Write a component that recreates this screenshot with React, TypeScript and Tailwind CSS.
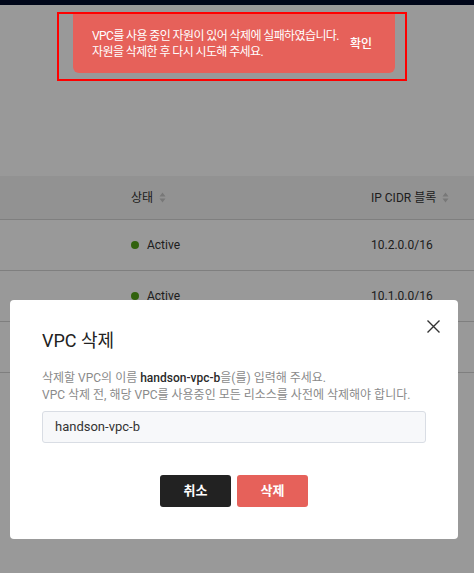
import React from 'react';

const SortIcon: React.FC = () => (
  <svg width="7" height="11" viewBox="0 0 7 11" className="ml-[6px] text-[#c8c8c8]" fill="currentColor">
    <path d="M3.5 0.5 L6.5 4.5 L0.5 4.5 Z" />
    <path d="M3.5 10.5 L6.5 6.5 L0.5 6.5 Z" />
  </svg>
);

const rows = [
  { status: 'Active', cidr: '10.2.0.0/16' },
  { status: 'Active', cidr: '10.1.0.0/16' },
  { status: 'Active', cidr: '10.0.0.0/16' },
];

const App: React.FC = () => {
  return (
    <div className="relative w-full h-[573px] overflow-hidden bg-white font-['Roboto','Noto_Sans_CJK_KR',sans-serif]">
      {/* page underneath */}
      <div className="h-[5px] bg-[#000a2b]" />
      <div className="h-[171px]" />
      <div className="flex items-center h-[44px] bg-[#f4f4f4] border-b border-[#d4d4d4] text-[12px] text-[#333]">
        <div className="w-[131px]" />
        <div className="w-[240px] flex items-center">
          상태
          <SortIcon />
        </div>
        <div className="flex items-center">
          IP CIDR 블록
          <SortIcon />
        </div>
      </div>
      {rows.map((r) => (
        <div key={r.cidr} className="flex items-center h-[51px] border-b border-[#d4d4d4] text-[12px] text-[#333]">
          <div className="w-[131px]" />
          <div className="w-[240px] flex items-center">
            <span className="w-[8px] h-[8px] rounded-full bg-[#52a317] mr-[8px]" />
            {r.status}
          </div>
          <div>{r.cidr}</div>
        </div>
      ))}

      {/* dim overlay */}
      <div className="absolute inset-0 bg-black/40" />

      {/* toast with highlight */}
      <div className="absolute left-[57px] top-[12px] w-[350px] h-[69px] border-2 border-[#ff0000]">
        <div className="ml-[14px] w-[322px] h-[59px] bg-[#e6615a] rounded-b-[6px] flex items-center justify-between pl-[19px] pr-[23px] text-white text-[12px] leading-[16px]">
          <div className="whitespace-nowrap tracking-[-0.6px]">
            <div>VPC를 사용 중인 자원이 있어 삭제에 실패하였습니다.</div>
            <div>자원을 삭제한 후 다시 시도해 주세요.</div>
          </div>
          <button className="shrink-0 whitespace-nowrap font-medium text-[12px]">확인</button>
        </div>
      </div>

      {/* modal */}
      <div className="absolute left-[10px] top-[300px] w-[448px] h-[239px] bg-white rounded-[4px] px-[32px] pt-[28px]">
        <button className="absolute right-[19px] top-[20px] w-[12px] h-[12px] text-[#333]">
          <svg width="13" height="13" viewBox="0 0 13 13" fill="none" stroke="currentColor" strokeWidth="1.4">
            <path d="M0.5 0.5 L12.5 12.5 M12.5 0.5 L0.5 12.5" />
          </svg>
        </button>
        <h2 className="text-[18px] leading-[26px] text-[#222]">VPC 삭제</h2>
        <div className="mt-[16px] text-[12px] leading-[17px] text-[#8a8a8a]">
          <div>
            삭제할 VPC의 이름 <span className="font-medium text-[#2a2a2a]">handson-vpc-b</span>을(를) 입력해 주세요.
          </div>
          <div>VPC 삭제 전, 해당 VPC를 사용중인 모든 리소스를 사전에 삭제해야 합니다.</div>
        </div>
        <div className="mt-[7px] h-[32px] bg-[#f7f8fa] border border-[#d9dde4] rounded-[3px] flex items-center px-[12px] text-[13px] text-[#333]">
          handson-vpc-b
        </div>
        <div className="mt-[32px] flex justify-center gap-[6px]">
          <button className="w-[71px] h-[32px] rounded-[3px] bg-[#222] text-white text-[13px] font-bold">취소</button>
          <button className="w-[71px] h-[32px] rounded-[3px] bg-[#e6615a] text-white text-[13px] font-bold">삭제</button>
        </div>
      </div>
    </div>
  );
};

export default App;
